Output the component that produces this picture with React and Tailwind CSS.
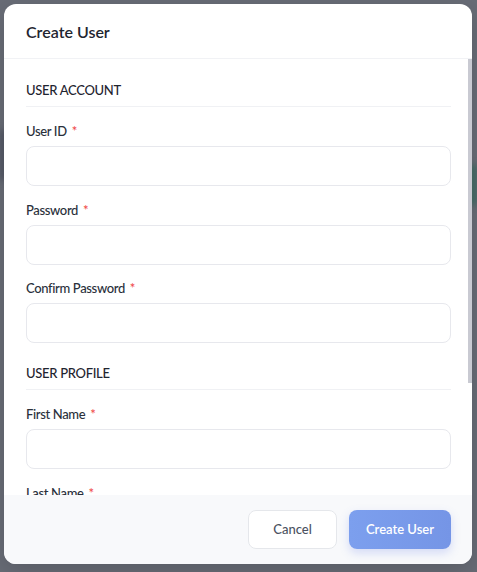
import React from "react";

const font = { fontFamily: 'Lato, "Noto Sans", Arial, sans-serif' };

function Field({ label, className = "" }) {
  return (
    <div className={"flex flex-col " + className}>
      <label className="text-[13px] leading-[18px] font-medium tracking-[-0.35px] text-[#2a303b]">
        {label} <span className="text-[#ef4444] ml-[2px]">*</span>
      </label>
      <div className="mt-[6px] h-[40px] rounded-[8px] border border-[#e7e8ed] bg-white" />
    </div>
  );
}

function Section({ title, className = "" }) {
  return (
    <div className={"border-b border-[#f0f1f4] pb-[6px] text-[13px] leading-[20px] font-medium tracking-[-0.3px] text-[#1f2530] " + className}>
      {title}
    </div>
  );
}

export default function App() {
  return (
    <div
      className="relative h-[572px] w-full overflow-hidden bg-[#686c76] px-[4px] pt-[4px]"
      style={font}
    >
      <div className="pointer-events-none absolute right-0 top-[165px] h-[40px] w-[8px] bg-[#3f6b63] blur-[3px]" />
      <div className="pointer-events-none absolute left-0 top-[130px] h-[50px] w-[6px] bg-[#4c5260] blur-[3px]" />
      <div className="relative flex h-[560px] w-[468px] flex-col overflow-hidden rounded-[12px] bg-white shadow-[0_8px_24px_rgba(0,0,0,0.15)]">
        <div className="flex h-[55px] shrink-0 items-center border-b border-[#f1f2f5] px-[22px] pt-[1px]">
          <h2 className="text-[16px] font-semibold text-[#1f2530]">Create User</h2>
        </div>
        <div className="relative flex-1 overflow-hidden">
          <div className="flex flex-col pl-[22px] pr-[21px] pt-[21px]">
            <Section title="USER ACCOUNT" />
            <Field label="User ID" className="mt-[15px]" />
            <Field label="Password" className="mt-[15px]" />
            <Field label="Confirm Password" className="mt-[14px]" />
            <Section title="USER PROFILE" className="mt-[20px]" />
            <Field label="First Name" className="mt-[15px]" />
            <Field label="Last Name" className="mt-[15px]" />
          </div>
          <div className="absolute right-0 top-0 h-[324px] w-[4px] bg-[#c9cad2]" />
        </div>
        <div className="flex h-[69px] shrink-0 items-center justify-end gap-[12px] bg-[#f8f9fb] px-[21px]">
          <button className="h-[39px] w-[89px] rounded-[8px] border border-[#e5e7eb] bg-white text-[13px] font-medium text-[#4b5261]">
            Cancel
          </button>
          <button className="h-[39px] w-[102px] rounded-[8px] bg-gradient-to-r from-[#7c9fee] to-[#7595e6] text-[13px] font-semibold text-white shadow-[0_4px_10px_rgba(102,126,234,0.25)]">
            Create User
          </button>
        </div>
      </div>
    </div>
  );
}
